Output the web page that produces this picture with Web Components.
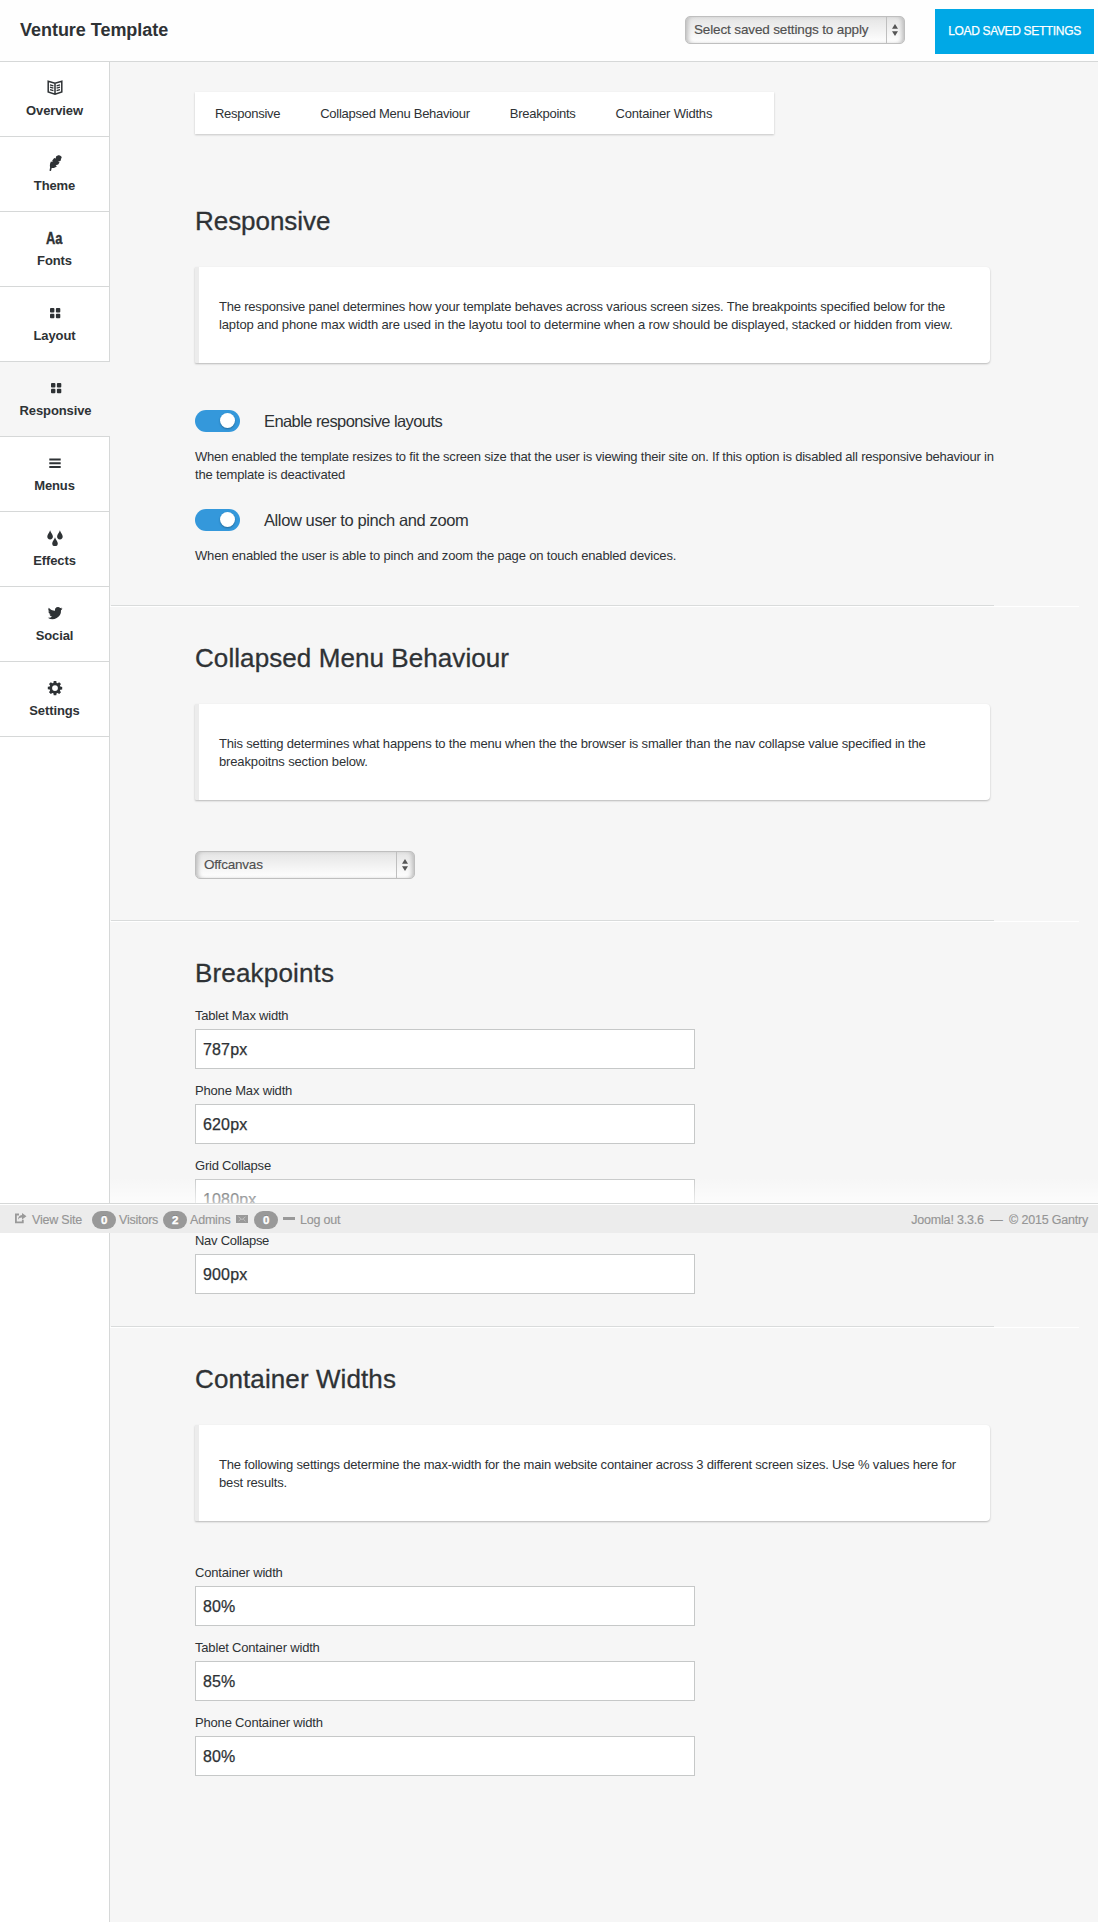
<!DOCTYPE html>
<html lang="en">
<head>
<meta charset="utf-8">
<title>Venture Template</title>
<style>
html,body{margin:0;padding:0}
body{width:1098px;height:1922px;overflow:hidden;background:#f6f6f6;color:#2e3235;font-family:"Liberation Sans",Arial,sans-serif;font-size:13px}
</style>
</head>
<body>
<app-shell></app-shell>
<script>
const define = (name, html) => customElements.define(name, class extends HTMLElement {
  connectedCallback() {
    if (this.shadowRoot) return;
    this.attachShadow({ mode: 'open' }).innerHTML = typeof html === 'function' ? html(this) : html;
  }
});

const icons = {
  book: '<g fill="none" stroke="currentColor" stroke-width="1.5"><path d="M8 3.2 1.2 1.3V12L8 14.3 14.8 12V1.3zM8 3.2V14"/><path stroke-width="1.3" d="M3 4.8l3.4 1M3 7.2l3.4 1M3 9.6l3.4 1M13 4.8l-3.4 1M13 7.2l-3.4 1M13 9.6l-3.4 1"/></g>',
  leaf: '<path d="M14 1.200C12.500-.2 10.300.2 9 1.800L8.700 3.400 7.200 3 5.300 5.400 5.500 6.900 3.900 6.600C2.900 8.500 2.600 10.500 3.100 12.200L2.500 15.800l1.500.2.7-3c2 .3 3.900-.4 5.200-1.700L8.600 10.200l2.600-.7 1.400-2.200-1.600-.5 2.300-.7c.7-.8.7-1.700.6-2.400 1-.6 1-1.800.1-2.500z"/>',
  grid: '<rect x="3" y="3" width="4.400" height="4.400" rx=".9"/><rect x="8.900" y="3" width="4.400" height="4.400" rx=".9"/><rect x="3" y="8.800" width="4.400" height="4.400" rx=".9"/><rect x="8.900" y="8.800" width="4.400" height="4.400" rx=".9"/>',
  menu: '<path d="M2.300 3.500h11.400v1.900H2.300zM2.300 7.300h11.400v1.900H2.300zM2.300 11h11.400v1.900H2.300z"/>',
  drops: '<path d="M3.100.3C3.700 3 5.900 4.400 5.900 6.600a2.800 2.800 0 0 1-5.600 0C.3 4.400 2.500 3 3.100.3zM12.900.3c.6 2.700 2.800 4.100 2.800 6.300a2.800 2.800 0 0 1-5.600 0c0-2.200 2.200-3.600 2.800-6.300zM8 7.300c.6 2.700 2.800 4.100 2.800 6.100a2.800 2.800 0 0 1-5.600 0c0-2 2.200-3.400 2.800-6.100z"/>',
  bird: '<path d="M15.500 3.500c-.5.300-1.100.4-1.700.5.600-.4 1-.9 1.300-1.600-.6.300-1.200.6-1.900.7a3 3 0 0 0-5.200 2.700C5.500 5.700 3.300 4.500 1.800 2.700a3 3 0 0 0 1 4c-.5 0-1-.2-1.400-.4 0 1.500 1 2.700 2.400 3-.4.100-.9.100-1.300.1.400 1.200 1.500 2 2.800 2.100A6.100 6.100 0 0 1 .8 12.700a8.500 8.500 0 0 0 13.200-7.500c.6-.4 1.100-1 1.500-1.700z"/>',
  gear: '<path fill-rule="evenodd" d="M6.700 1h2.600l.3 1.900 1 .4 1.600-1.100L14 4l-1.100 1.600.4 1 1.900.3v2.500l-1.900.3-.4 1L14 12.300 12.200 14l-1.600-1.100-1 .4-.3 1.900H6.700l-.3-1.900-1-.4L3.800 14 2 12.200l1.100-1.600-.4-1L.8 9.300V6.800l1.900-.3.4-1L2 3.900l1.800-1.700 1.600 1.100 1-.4zM8 5.200a2.900 2.900 0 1 0 0 5.800 2.900 2.900 0 0 0 0-5.800z"/>'
};

define('nav-item', el => `<style>
:host{display:block;box-sizing:border-box;width:109px;height:75px;border-bottom:1px solid #d6d8d8;background:#fff;text-align:center;color:#2e3235;overflow:hidden}
:host([active]){width:110px;background:#f6f6f6;padding-left:1px}
.i{height:16px;margin-top:18px;display:flex;justify-content:center;align-items:center;font:bold 16px/16px "Liberation Sans",sans-serif}
.i span{transform:scaleX(.8);padding-top:2px;-webkit-text-stroke:.4px}
svg{display:block;fill:currentColor}
.l{font:bold 13px/16px "Liberation Sans",sans-serif;letter-spacing:-.1px;margin-top:7px}
</style><div class="i">${el.getAttribute('icon') === 'aa' ? '<span>Aa</span>' : `<svg width="16" height="16" viewBox="0 0 16 16">${icons[el.getAttribute('icon')]}</svg>`}</div><div class="l"><slot></slot></div>`);

define('select-box', `<style>
:host{display:flex;box-sizing:border-box;width:220px;height:28px;border:1px solid #bfbfbf;border-radius:5px;background:linear-gradient(#e4e4e4,#fff);box-shadow:inset 4px 0 4px -2px #bdbdbd,inset -4px 0 4px -2px #bdbdbd;color:#505050;font-size:13.5px;line-height:26px;letter-spacing:var(--ls,0);-webkit-text-stroke:.15px}
.t{flex:1;padding-left:8px;white-space:nowrap}
.a{box-sizing:border-box;width:18px;padding-right:2px;border-left:1px solid #bfbfbf;display:flex;align-items:center;justify-content:center}
</style><div class="t"><slot></slot></div><div class="a"><svg width="8" height="12" viewBox="0 0 8 12" fill="#555"><path d="M4 0 7 4.800H1zM1 7.200h6L4 12z"/></svg></div>`);

define('top-bar', `<style>
:host{display:flex;box-sizing:border-box;height:62px;background:#fefefe;border-bottom:1px solid #d6d8d8;align-items:flex-start;padding-right:4px}
h1{margin:19px auto 0 20px;font-size:18px;line-height:22px;letter-spacing:-.03px}
select-box{margin-top:16px}
button{margin:9px 0 0 30px;width:159px;height:45px;border:0;padding:0 0 1px;background:#00a8e6;color:#fff;font:12px "Liberation Sans",sans-serif;letter-spacing:-.34px;-webkit-text-stroke:.25px;white-space:nowrap}
</style><h1>Venture Template</h1><select-box style="--ls:-.14px">Select saved settings to apply</select-box><button>LOAD SAVED SETTINGS</button>`);

define('tab-strip', `<style>
:host{display:flex;box-sizing:border-box;width:579px;height:42px;background:#fff;box-shadow:0 1px 2px rgba(0,0,0,.2);line-height:44px;letter-spacing:-.27px}
span{padding:0 20px;white-space:nowrap}
span:first-child{letter-spacing:-.33px}
span:last-child{letter-spacing:-.19px}
</style><span>Responsive</span><span>Collapsed Menu Behaviour</span><span>Breakpoints</span><span>Container Widths</span>`);

define('text-line', el => `<style>:host{display:block;white-space:nowrap;letter-spacing:${el.getAttribute('track')}px}</style><slot></slot>`);

define('info-panel', `<style>
:host{display:block;box-sizing:border-box;width:795px;height:96px;margin-top:31px;padding:31px 0 29px 20px;border-left:4px solid #ececec;border-radius:1px 4px 4px 1px;background:#fff;box-shadow:0 1px 2px rgba(0,0,0,.25);line-height:18px}
</style><slot></slot>`);

define('toggle-option', el => `<style>
:host{display:block;width:820px}
.r{display:flex;height:22px;align-items:center}
.s{box-sizing:border-box;width:45px;height:22px;border-radius:11px;background:#3498db;display:flex;align-items:center;justify-content:flex-end;padding:0 5px 1px 0}
.s i{width:15px;height:15px;border-radius:50%;background:#fff;box-shadow:0 1px 2px rgba(0,0,0,.3)}
.t{margin-left:24px;font-size:16.5px;line-height:22px;letter-spacing:${el.getAttribute('track')}px}
p{margin:16px 0 0;line-height:18px}
</style><div class="r"><div class="s"><i></i></div><div class="t">${el.getAttribute('label')}</div></div><p><slot></slot></p>`);

define('text-field', el => `<style>
:host{display:block;height:75px}
label{display:block;line-height:16px;height:21px;letter-spacing:${el.getAttribute('track') || -.22}px}
div{box-sizing:border-box;width:500px;height:40px;border:1px solid #c6c8c8;background:#fff;padding-left:7px;font-size:16px;line-height:39px;letter-spacing:.15px;-webkit-text-stroke:.25px}
</style><label>${el.getAttribute('label')}</label><div><slot></slot></div>`);

define('settings-section', el => `<style>
:host{display:block;box-sizing:border-box;padding-left:85px}
h2{margin:0;font-weight:400;font-size:26px;line-height:30px;white-space:nowrap;letter-spacing:${el.getAttribute('track')}px;-webkit-text-stroke:.3px}
</style><h2>${el.getAttribute('title-text')}</h2><slot></slot>`);

define('section-rule', `<style>
:host{display:block;width:969px;height:2px;background:linear-gradient(#d9dbdb,#d9dbdb) 1px 0/883px 1px no-repeat,linear-gradient(#fff,#fff) 0 1px/969px 1px no-repeat}
</style>`);

define('status-bar', `<style>
:host{display:flex;box-sizing:border-box;position:absolute;left:0;top:1203px;width:1098px;height:30px;background:#ececec;border-top:1px solid #d6d8d8;box-shadow:inset 0 1px #fff;color:#959595;font-size:12.5px;line-height:33px;align-items:flex-start;letter-spacing:-.2px;white-space:nowrap;-webkit-text-stroke:.15px}
.fade{position:absolute;left:110px;right:0;top:-27px;height:26px;background:linear-gradient(rgba(255,255,255,0),rgba(255,255,255,.68))}
b{display:block;width:24px;height:18px;border-radius:9px;margin-top:7px;background:#999;color:#fff;font-size:11.5px;line-height:18px;text-align:center;text-shadow:0 -1px rgba(0,0,0,.25);-webkit-text-stroke:.4px;flex:none}
svg{display:block;flex:none}
span{box-sizing:border-box}
.view{width:60px}
.visitors{width:47px;padding-left:3px}
.admins{width:49px;padding-left:3px}
.right{margin-left:auto;margin-right:10px;white-space:pre}
</style><div class="fade"></div>
<svg width="13" height="11" viewBox="0 0 13 11" style="margin:9px 5px 0 14px"><path d="M5 1.500H1.900V9.300H8.800V6.800" fill="none" stroke="#999" stroke-width="1.800"/><path fill="#999" d="M8 0l4.500 3.200L8 6.500V4.600C6 4.500 5 5.300 4 6.800 4 4 5.400 2.200 8 2z"/></svg>
<span class="view">View Site</span><b>0</b><span class="visitors">Visitors</span><b>2</b><span class="admins">Admins</span>
<svg width="12" height="8" viewBox="0 0 12 8" style="margin-top:11px"><path fill="#999" d="M0 0h12v8H0z"/><path d="M2.500 1.800 6 4.600 9.500 1.800M2.500 6.300 4.800 4M9.500 6.300 7.200 4" fill="none" stroke="#d0d0d0" stroke-width=".7"/></svg>
<b style="margin-left:6px">0</b><svg width="12" height="3" style="margin:13px 5px 0 5px"><path fill="#999" d="M0 0h12v3H0z"/></svg><span>Log out</span>
<span class="right">Joomla! 3.3.6 &nbsp;—&nbsp; © 2015 Gantry</span>`);

define('app-shell', `<style>
:host{display:block;position:relative;width:1098px;height:1922px;overflow:hidden}
.body{display:flex;height:1860px}
aside{box-sizing:border-box;width:110px;flex:none;background:#fff;border-right:1px solid #d6d8d8}
main{flex:1;display:flex;flex-direction:column}
tab-strip{margin:30px 0 0 85px}
</style>
<top-bar></top-bar>
<div class="body">
<aside>
<nav-item icon="book">Overview</nav-item><nav-item icon="leaf">Theme</nav-item><nav-item icon="aa">Fonts</nav-item><nav-item icon="grid">Layout</nav-item><nav-item icon="grid" active>Responsive</nav-item><nav-item icon="menu">Menus</nav-item><nav-item icon="drops">Effects</nav-item><nav-item icon="bird">Social</nav-item><nav-item icon="gear">Settings</nav-item>
</aside>
<main>
<tab-strip></tab-strip>
<settings-section title-text="Responsive" track="-.05" style="height:399px;margin-top:72px">
<info-panel><text-line track="-.2">The responsive panel determines how your template behaves across various screen sizes. The breakpoints specified below for the</text-line><text-line track="-.14">laptop and phone max width are used in the layotu tool to determine when a row should be displayed, stacked or hidden from view.</text-line></info-panel>
<toggle-option label="Enable responsive layouts" track="-.58" style="margin-top:47px;height:99px"><text-line track="-.204">When enabled the template resizes to fit the screen size that the user is viewing their site on. If this option is disabled all responsive behaviour in</text-line><text-line track="-.17">the template is deactivated</text-line></toggle-option>
<toggle-option label="Allow user to pinch and zoom" track="-.4"><text-line track="-.16">When enabled the user is able to pinch and zoom the page on touch enabled devices.</text-line></toggle-option>
</settings-section>
<section-rule></section-rule>
<settings-section title-text="Collapsed Menu Behaviour" track=".08" style="padding-top:36px;height:313px">
<info-panel><text-line track="-.18">This setting determines what happens to the menu when the the browser is smaller than the nav collapse value specified in the</text-line><text-line track="-.14">breakpoitns section below.</text-line></info-panel>
<select-box style="margin-top:51px;--ls:-.2px">Offcanvas</select-box>
</settings-section>
<section-rule></section-rule>
<settings-section title-text="Breakpoints" track=".17" style="padding-top:36px;height:404px">
<text-field label="Tablet Max width" style="margin-top:20px">787px</text-field><text-field label="Phone Max width" track="-.17">620px</text-field><text-field label="Grid Collapse">1080px</text-field><text-field label="Nav Collapse" track="-.27">900px</text-field>
</settings-section>
<section-rule></section-rule>
<settings-section title-text="Container Widths" track=".1" style="padding-top:36px">
<info-panel><text-line track="-.19">The following settings determine the max-width for the main website container across 3 different screen sizes. Use % values here for</text-line><text-line track="-.16">best results.</text-line></info-panel>
<text-field label="Container width" track="-.18" style="margin-top:44px">80%</text-field><text-field label="Tablet Container width" track="-.18">85%</text-field><text-field label="Phone Container width" track="-.18">80%</text-field>
</settings-section>
</main>
</div>
<status-bar></status-bar>`);
</script>
</body>
</html>
